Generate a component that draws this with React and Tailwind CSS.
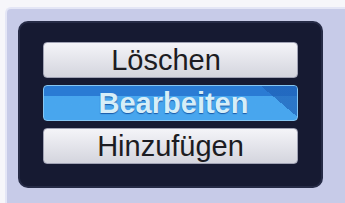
import React from 'react'

const items = [
    { label: 'Löschen', active: false, shift: '-ml-[9px]' },
    { label: 'Bearbeiten', active: true, shift: 'ml-[6px]' },
    { label: 'Hinzufügen', active: false, shift: '' },
]

function MenuButton({ label, active, shift }) {
    if (active) {
        return (
            <div className="relative h-[36px] rounded-[4px] border border-[#86c6f2] bg-gradient-to-b from-[#2a7bd4] from-30% to-[#48a6ee] to-30% overflow-hidden flex items-center justify-center">
                <div className="absolute right-0 top-0 h-full w-[40px] bg-gradient-to-bl from-[#1f62b8] from-45% to-transparent to-45% opacity-70" />
                <span className={`relative text-[29px] leading-none font-bold text-[#d6eef8] [text-shadow:0_1px_1px_#1a5aa8] font-['Liberation_Sans',Arial,sans-serif] ${shift}`}>
                    {label}
                </span>
            </div>
        )
    }
    return (
        <div className="h-[36px] rounded-[4px] border border-[#a0a2b4] bg-gradient-to-b from-[#f4f4f8] to-[#d4d5de] flex items-center justify-center">
            <span className={`text-[29px] leading-none text-[#1c1c22] font-['Liberation_Sans',Arial,sans-serif] ${shift}`}>
                {label}
            </span>
        </div>
    )
}

export default function App() {
    return (
        <div className="w-[345px] h-[203px] bg-[#f6f6fa] pl-[5px] pt-[7px] overflow-hidden">
            <div className="h-[210px] w-[340px] bg-[#c7cbe8] border-l-2 border-t-2 border-[#e4e6f6] rounded-tl-[6px] pl-[11px] pt-[12px]">
                <div className="w-[305px] h-[167px] rounded-[10px] bg-[#161a32] border-2 border-[#262b46] pt-[19px] px-[23px] flex flex-col gap-[7px]">
                    {items.map((it) => (
                        <MenuButton key={it.label} {...it} />
                    ))}
                </div>
            </div>
        </div>
    )
}
